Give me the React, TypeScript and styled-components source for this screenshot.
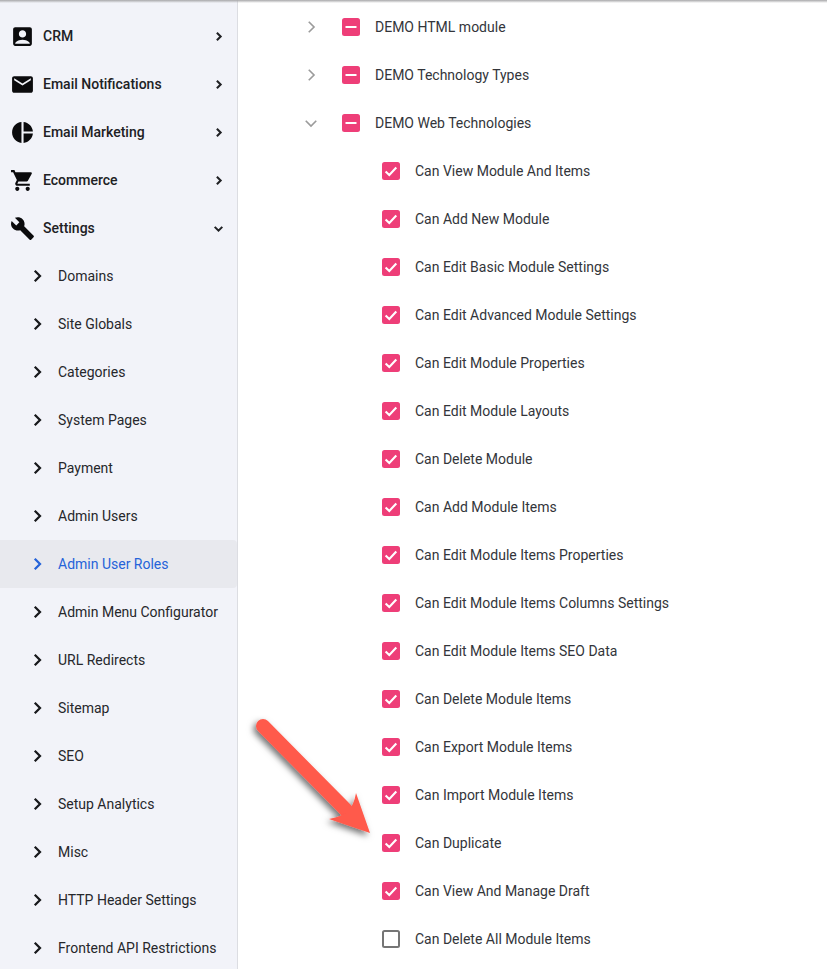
import React from "react";
import styled, { createGlobalStyle } from "styled-components";
import { MdAccountBox, MdEmail, MdPieChart, MdShoppingCart, MdBuild } from "react-icons/md";

const Global = createGlobalStyle`
  html, body { margin: 0; padding: 0; background: #fff; }
  body { font-family: Roboto, "Liberation Sans", sans-serif; }
`;

const Page = styled.div`
  position: relative;
  width: 827px;
  height: 969px;
  overflow: hidden;
  display: flex;
  background: #fff;
  &::before {
    content: "";
    position: absolute;
    top: 0; left: 0; right: 0;
    height: 3px;
    background: linear-gradient(#a8a8aa, rgba(200,200,200,0));
    z-index: 2;
  }
`;

const Sidebar = styled.nav`
  flex: 0 0 238px;
  height: 969px;
  box-sizing: border-box;
  padding-top: 12px;
  background: #f2f3f9;
  border-right: 1px solid #dcdde2;
  overflow: hidden;
`;

const TopRow = styled.div`
  display: flex;
  align-items: center;
  height: 48px;
  padding: 0 12px 0 10px;
  font-size: 14px;
  font-weight: 500;
  color: #202124;
`;

const TopIcon = styled.span`
  display: flex;
  width: 25px;
  height: 25px;
  margin-right: 8px;
  color: #0b0b0d;
  font-size: 25px;
`;

const TopLabel = styled.span`
  flex: 1;
`;

const SubRow = styled.div<{ $active?: boolean }>`
  display: flex;
  align-items: center;
  height: 48px;
  padding-left: 28px;
  font-size: 14px;
  color: ${(p) => (p.$active ? "#2563d9" : "#26272b")};
  background: ${(p) => (p.$active ? "#e8e9ee" : "transparent")};
  border-radius: ${(p) => (p.$active ? "0 4px 4px 0" : "0")};
`;

const SubLabel = styled.span`
  margin-left: 12px;
`;

const Tree = styled.main`
  flex: 1;
  padding-top: 3px;
  min-width: 0;
`;

const TreeRow = styled.div<{ $child?: boolean }>`
  display: flex;
  align-items: center;
  height: 48px;
  padding-left: ${(p) => (p.$child ? "144px" : "63px")};
  font-size: 14px;
  color: #33353a;
  white-space: nowrap;
`;

const Toggle = styled.span`
  display: flex;
  justify-content: center;
  width: 20px;
  margin-right: 21px;
  color: #9b9b9b;
`;

const Box = styled.span<{ $on: boolean }>`
  display: flex;
  align-items: center;
  justify-content: center;
  box-sizing: border-box;
  width: 18px;
  height: 18px;
  margin-right: 15px;
  border-radius: 2.5px;
  background: ${(p) => (p.$on ? "#ee3e78" : "#fff")};
  border: ${(p) => (p.$on ? "none" : "2px solid #757575")};
`;

const Arrow = styled.svg`
  position: absolute;
  left: 240px;
  top: 700px;
  width: 150px;
  height: 150px;
  overflow: visible;
`;

const Chevron = ({ dir, size, stroke, w }: { dir: "right" | "down"; size: number; stroke?: string; w: number }) => (
  <svg width={size} height={size} viewBox="0 0 24 24" fill="none" stroke={stroke || "currentColor"} strokeWidth={w}>
    <path d={dir === "right" ? "M9 5l7 7-7 7" : "M5 9l7 7 7-7"} />
  </svg>
);

const tops = [
  { label: "CRM", icon: <MdAccountBox /> },
  { label: "Email Notifications", icon: <MdEmail /> },
  { label: "Email Marketing", icon: <MdPieChart /> },
  { label: "Ecommerce", icon: <MdShoppingCart /> },
  { label: "Settings", icon: <MdBuild />, open: true },
];

const subs = [
  "Domains", "Site Globals", "Categories", "System Pages", "Payment", "Admin Users",
  "Admin User Roles", "Admin Menu Configurator", "URL Redirects", "Sitemap", "SEO",
  "Setup Analytics", "Misc", "HTTP Header Settings", "Frontend API Restrictions",
];

const modules = ["DEMO HTML module", "DEMO Technology Types", "DEMO Web Technologies"];

const perms = [
  "Can View Module And Items", "Can Add New Module", "Can Edit Basic Module Settings",
  "Can Edit Advanced Module Settings", "Can Edit Module Properties", "Can Edit Module Layouts",
  "Can Delete Module", "Can Add Module Items", "Can Edit Module Items Properties",
  "Can Edit Module Items Columns Settings", "Can Edit Module Items SEO Data", "Can Delete Module Items",
  "Can Export Module Items", "Can Import Module Items", "Can Duplicate", "Can View And Manage Draft",
  "Can Delete All Module Items",
];

export default function App() {
  return (
    <Page>
      <Global />
      <Sidebar>
        {tops.map((t) => (
          <TopRow key={t.label}>
            <TopIcon>{t.icon}</TopIcon>
            <TopLabel>{t.label}</TopLabel>
            <Chevron dir={t.open ? "down" : "right"} size={13} w={3.8} />
          </TopRow>
        ))}
        {subs.map((s) => (
          <SubRow key={s} $active={s === "Admin User Roles"}>
            <Chevron dir="right" size={18} w={3} stroke={s === "Admin User Roles" ? "#2563d9" : "#17181b"} />
            <SubLabel>{s}</SubLabel>
          </SubRow>
        ))}
      </Sidebar>
      <Tree>
        {modules.map((m, i) => (
          <TreeRow key={m}>
            <Toggle><Chevron dir={i === 2 ? "down" : "right"} size={18} w={2.2} /></Toggle>
            <Box $on>
              <svg width="18" height="18" viewBox="0 0 18 18"><path d="M3.5 9h11" stroke="#fff" strokeWidth="2" /></svg>
            </Box>
            {m}
          </TreeRow>
        ))}
        {perms.map((p, i) => {
          const on = i !== perms.length - 1;
          return (
            <TreeRow key={p} $child>
              <Box $on={on}>
                {on && (
                  <svg width="18" height="18" viewBox="0 0 18 18" fill="none">
                    <path d="M3.6 9.4l3.7 3.5 7-7.4" stroke="#fff" strokeWidth="2.1" />
                  </svg>
                )}
              </Box>
              {p}
            </TreeRow>
          );
        })}
      </Tree>
      <Arrow viewBox="0 0 150 150">
        <defs>
          <filter id="arrowShadow" x="-30%" y="-30%" width="160%" height="160%">
            <feDropShadow dx="-2.5" dy="3" stdDeviation="3" floodColor="#000" floodOpacity="0.55" />
          </filter>
        </defs>
        <g filter="url(#arrowShadow)" fill="#ff5a4b">
          <path d="M23 26L106 110" stroke="#ff5a4b" strokeWidth="14" strokeLinecap="round" />
          <path d="M116 93L130 133L89 119Q103 116 108 111Q114 105 116 93Z" />
        </g>
      </Arrow>
    </Page>
  );
}
